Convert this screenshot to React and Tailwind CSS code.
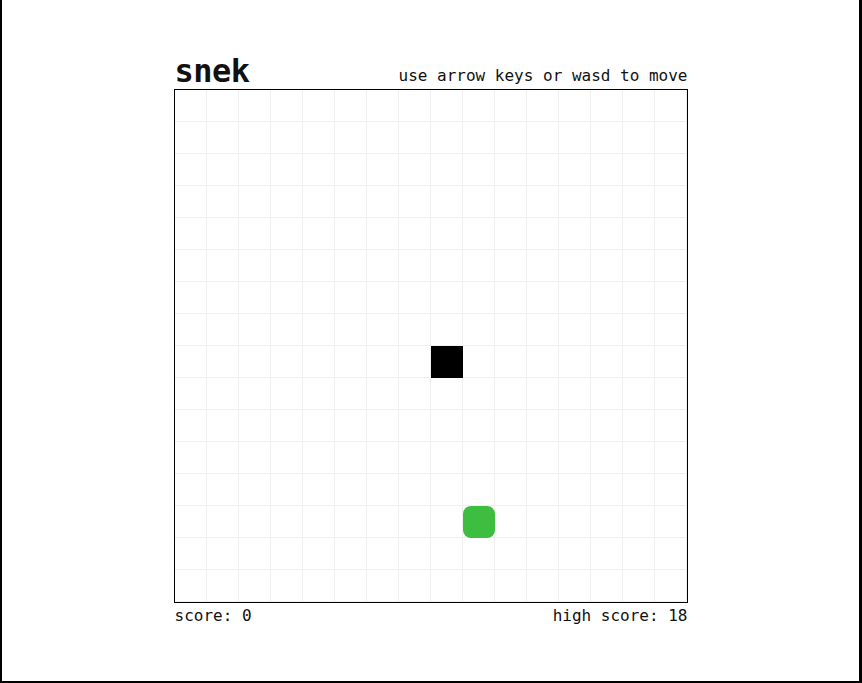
import React from "react";

const CELLS = 16;

export default function App() {
  const snake = [[8, 8]];
  const food = [9, 13];
  const cells = [];
  for (let r = 0; r < CELLS; r++) {
    for (let c = 0; c < CELLS; c++) {
      const isSnake = snake.some(([x, y]) => x === c && y === r);
      const isFood = food[0] === c && food[1] === r;
      cells.push(
        <div key={`${r}-${c}`} className="relative w-[32px] h-[32px] border-r border-b border-[#efefef]">
          {isSnake && <div className="absolute top-0 left-0 -right-px -bottom-px bg-black" />}
          {isFood && <div className="absolute top-0 left-0 -right-px -bottom-px bg-[#3dbe40] rounded-[8px]" />}
        </div>
      );
    }
  }
  return (
    <div
      className="h-screen w-full bg-white border-l-2 border-r-[3px] border-b-2 border-black flex items-center justify-center text-[#111]"
      style={{ fontFamily: '"DejaVu Sans Mono", "Liberation Mono", monospace' }}
    >
      <div className="w-[514px] flex flex-col mb-[2px]">
        <div className="flex justify-between items-end">
          <h1 className="text-[32px] leading-none font-bold tracking-[-0.5px] pb-[2px] pl-px">snek</h1>
          <span className="text-[16px] leading-none pb-[5px]">use arrow keys or wasd to move</span>
        </div>
        <div className="border border-black grid grid-cols-[repeat(16,32px)] w-[514px] h-[514px]">
          {cells}
        </div>
        <div className="flex justify-between text-[16px] leading-none pt-[5px] pl-px">
          <span>score: 0</span>
          <span>high score: 18</span>
        </div>
      </div>
    </div>
  );
}
